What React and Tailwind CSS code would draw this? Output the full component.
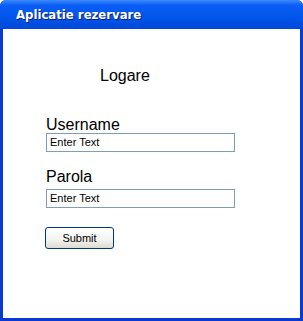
export default function App() {

  return (

    <div className="w-[303px] h-[321px] flex flex-col bg-[#0a3ad0] rounded-t-[6px] overflow-hidden">

      {/* title bar */}
      <div className="h-[29px] shrink-0 flex items-center pl-[16px] bg-[linear-gradient(to_bottom,#3d8bff_0%,#0a5ef5_18%,#0055ea_60%,#0048d8_100%)]">
        <span
          className="text-white text-[13px] font-semibold [text-shadow:1px_1px_0_#0a1f7a]"
          style={{ fontFamily: "'DejaVu Sans Condensed', 'DejaVu Sans', sans-serif" }}
        >
          Aplicatie rezervare
        </span>
      </div>

      {/* body */}
      <div className="flex-1 mx-[3px] mb-[3px] bg-white flex flex-col pl-[43px] text-black" style={{ fontFamily: "'Liberation Sans', Arial, sans-serif" }}>

        <div className="mt-[38px] ml-[54px] text-[16px] leading-[18px]">
          Logare
        </div>

        <div className="mt-[32px] text-[16px] leading-[16px]">
          Username
        </div>

        <div className="w-[189px] h-[19px] border border-[#7f9db9] flex items-center pl-[3px] text-[11px]">
          Enter Text
        </div>

        <div className="mt-[16px] text-[16px] leading-[18px]">
          Parola
        </div>

        <div className="mt-[3px] w-[189px] h-[19px] border border-[#7f9db9] flex items-center pl-[3px] text-[11px]">
          Enter Text
        </div>

        <button className="mt-[19px] -ml-[1px] w-[69px] h-[22px] rounded-[3px] border border-[#003c74] bg-[linear-gradient(to_bottom,#ffffff_0%,#f3f3ef_60%,#dcdad0_100%)] text-[11px] flex items-center justify-center">
          Submit
        </button>

      </div>

    </div>
  );
}
